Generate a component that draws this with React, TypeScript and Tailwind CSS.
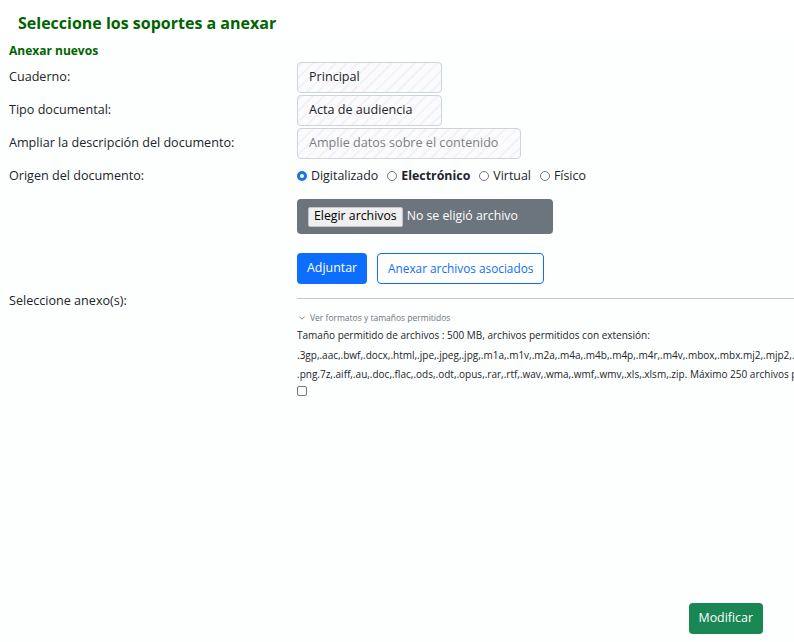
import { ChevronDown } from 'lucide-react';

const stripes =
    'bg-[repeating-linear-gradient(-45deg,#fbfafc_0px,#fbfafc_6px,#f3f2f6_6px,#f3f2f6_8px)]';

function Row({ label, children }: { label: string; children?: React.ReactNode }) {
    return (
        <div className="grid grid-cols-[288px_1fr] items-center">
            <div className="text-[12.6px] text-[#212529]">{label}</div>
            <div>{children}</div>
        </div>
    );
}

export default function App() {
    const origins = [
        { label: 'Digitalizado', checked: true },
        { label: 'Electrónico', bold: true },
        { label: 'Virtual' },
        { label: 'Físico' },
    ];

    return (
        <div
            className="w-[794px] h-[642px] overflow-hidden bg-[#fdfefe] flex flex-col"
            style={{ fontFamily: '"Open Sans", "Noto Sans", sans-serif' }}
        >
            <div className="bg-white pt-[11px] pl-[18px] h-[40px]">
                <h1 className="text-[16px] font-bold text-[#006400] leading-[24px]">Seleccione los soportes a anexar</h1>
            </div>

            <div className="pl-[9px] flex-1 flex flex-col">
                <h2 className="text-[12px] font-bold text-[#006400] leading-[20px] mt-[1px]">Anexar nuevos</h2>

                <div className="flex flex-col gap-[2px] mt-[1px]">
                    <Row label="Cuaderno:">
                        <div className={`w-[145px] h-[31px] border border-[#ced4da] rounded-[4px] ${stripes} px-[11px] flex items-center text-[12.6px] text-[#212529] whitespace-nowrap`}>
                            Principal
                        </div>
                    </Row>
                    <Row label="Tipo documental:">
                        <div className={`w-[145px] h-[31px] border border-[#ced4da] rounded-[4px] ${stripes} px-[11px] flex items-center text-[12.6px] text-[#212529] whitespace-nowrap`}>
                            Acta de audiencia
                        </div>
                    </Row>
                    <Row label="Ampliar la descripción del documento:">
                        <div className={`w-[224px] h-[31px] border border-[#ced4da] rounded-[4px] ${stripes} px-[11px] flex items-center text-[12.6px] text-[#7b8188] whitespace-nowrap overflow-hidden`}>
                            Amplie datos sobre el contenido
                        </div>
                    </Row>
                    <Row label="Origen del documento:">
                        <div className="flex items-center gap-[9px] h-[31px] text-[12.4px] text-[#212529]">
                            {origins.map((o) => (
                                <label key={o.label} className="flex items-center gap-[4px]">
                                    {o.checked ? (
                                        <span className="w-[10px] h-[10px] rounded-full border-[3px] border-[#1a73e8] bg-white" />
                                    ) : (
                                        <span className="w-[10px] h-[10px] rounded-full border border-[#767676] bg-white" />
                                    )}
                                    <span className={o.bold ? 'font-bold' : ''}>{o.label}</span>
                                </label>
                            ))}
                        </div>
                    </Row>
                </div>

                <div className="grid grid-cols-[288px_1fr] mt-[7px]">
                    <div />
                    <div className="flex flex-col">
                        <div className="w-[256px] h-[35px] bg-[#6c757d] rounded-[4px] flex items-center pl-[11px] gap-[4px]">
                            <span className="bg-[#efefef] border border-[#c4c4c4] rounded-[2px] px-[5px] h-[20px] flex items-center text-[12.3px] text-black">
                                Elegir archivos
                            </span>
                            <span className="text-[12.3px] text-white">No se eligió archivo</span>
                        </div>
                        <div className="flex gap-[10px] mt-[19px]">
                            <button className="h-[31px] px-[10px] bg-[#0d6efd] text-white text-[12.4px] rounded-[4px]">Adjuntar</button>
                            <button className="h-[31px] px-[10px] border border-[#0d6efd] text-[#0d6efd] text-[11.8px] rounded-[4px] bg-white">
                                Anexar archivos asociados
                            </button>
                        </div>
                    </div>
                </div>

                <div className="grid grid-cols-[288px_1fr] mt-[7px]">
                    <div className="text-[12.6px] text-[#212529] leading-[20px]">Seleccione anexo(s):</div>
                    <div className="overflow-hidden">
                        <div className="border-t border-[#c8c8c8] mt-[7px]" />
                        <div className="flex items-center gap-[3px] mt-[13px] text-[8.5px] text-[#6c757d] leading-[12px]">
                            <ChevronDown size={10} strokeWidth={2} />
                            <span>Ver formatos y tamaños permitidos</span>
                        </div>
                        <div className="text-[10px] text-[#212529] leading-[19.5px] whitespace-nowrap mt-[2px]">
                            <div>Tamaño permitido de archivos : 500 MB, archivos permitidos con extensión:</div>
                            <div>.3gp,.aac,.bwf,.docx,.html,.jpe,.jpeg,.jpg,.m1a,.m1v,.m2a,.m4a,.m4b,.m4p,.m4r,.m4v,.mbox,.mbx.mj2,.mjp2,.mp3,.mp4,.mpeg</div>
                            <div>.png.7z,.aiff,.au,.doc,.flac,.ods,.odt,.opus,.rar,.rtf,.wav,.wma,.wmf,.wmv,.xls,.xlsm,.zip. Máximo 250 archivos por carga</div>
                        </div>
                        <span className="block w-[10px] h-[10px] border border-[#767676] rounded-[2px] bg-white mt-[1px]" />
                    </div>
                </div>

                <div className="flex-1" />
                <div className="flex justify-end pr-[31px] pb-[8px]">
                    <button className="h-[31px] px-[10px] bg-[#198754] text-white text-[12.4px] rounded-[4px]">Modificar</button>
                </div>
            </div>
        </div>
    );
}
